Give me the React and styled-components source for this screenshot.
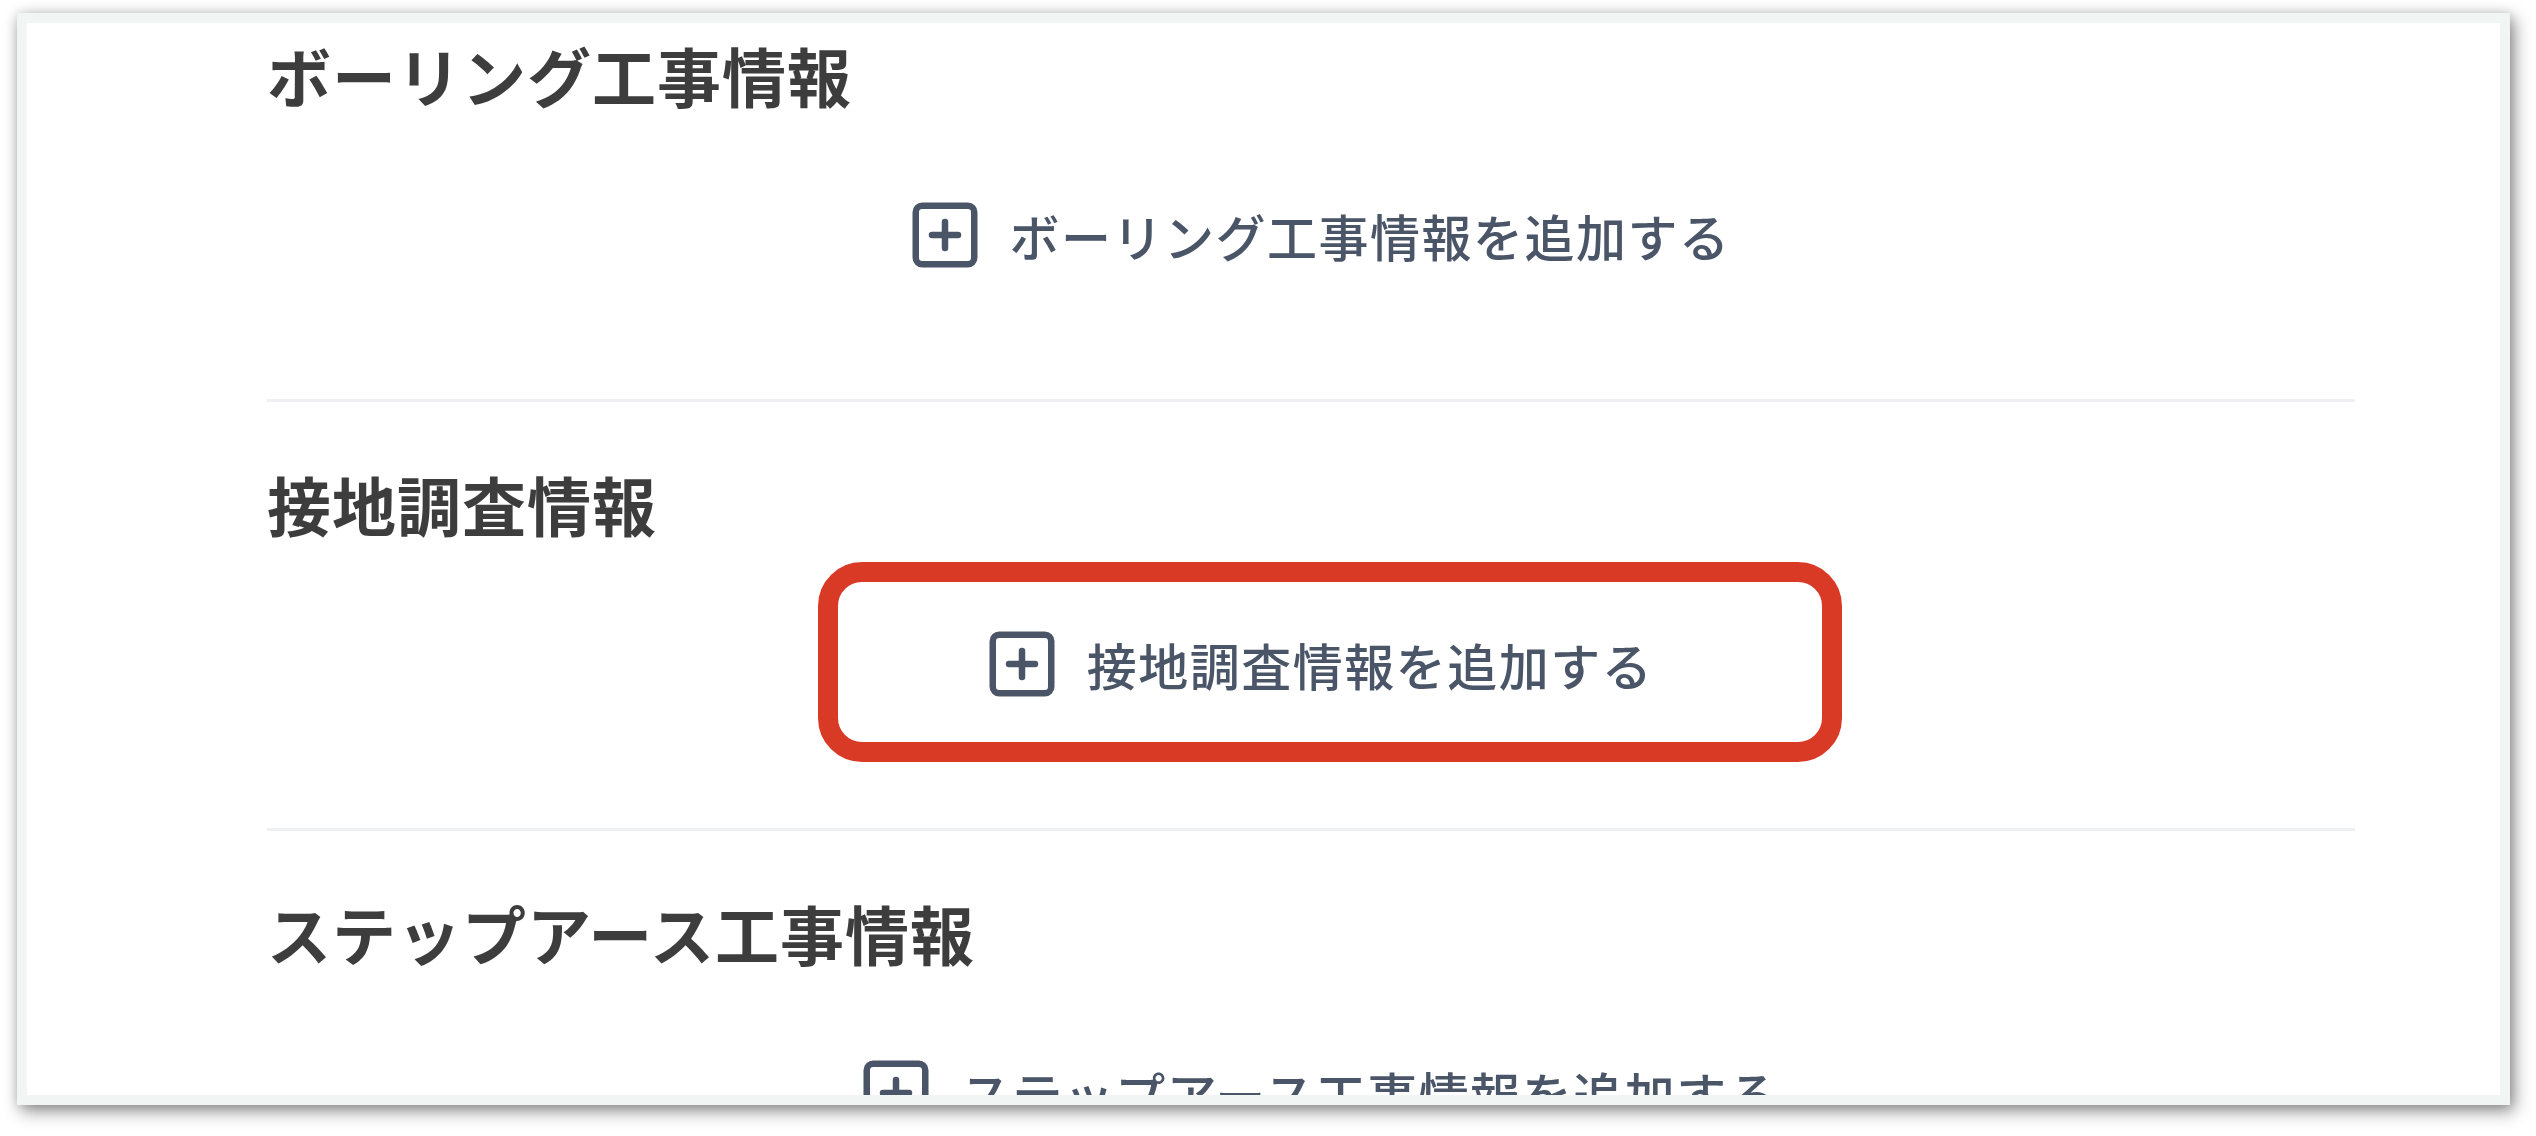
import React from 'react';
import styled, { createGlobalStyle } from 'styled-components';
import { SquarePlus } from 'lucide-react';

const GlobalStyle = createGlobalStyle`
  html, body {
    margin: 0;
    padding: 0;
    background: #ffffff;
  }
  body {
    font-family: "Noto Sans CJK JP", "Noto Sans", sans-serif;
  }
`;

const Page = styled.div`
  box-sizing: border-box;
  width: 2536px;
  height: 1136px;
  padding: 13px 26px 31px 17px;
  background: #ffffff;
`;

const Window = styled.div`
  box-sizing: border-box;
  width: 100%;
  height: 100%;
  border: 10px solid #f1f5f4;
  background: #ffffff;
  box-shadow: 4px 6px 16px rgba(0, 0, 0, 0.45), 0 0 10px rgba(0, 0, 0, 0.12);
  overflow: hidden;
`;

const Content = styled.div`
  display: flex;
  flex-direction: column;
  padding: 3px 145px 0 240px;
`;

const Section = styled.section`
  display: flex;
  flex-direction: column;
  gap: 33px;
  padding: 53px 0 84px;
  border-bottom: 3px solid #eef0f4;

  &:first-child {
    padding-top: 0;
  }
`;

const Heading = styled.h2`
  margin: 0;
  font-size: 64px;
  line-height: 96px;
  font-weight: 700;
  letter-spacing: 1px;
  color: #3d3d3d;
`;

const ButtonRow = styled.div`
  display: flex;
  justify-content: center;
  padding-left: 14px;
`;

const AddButton = styled.button`
  position: relative;
  box-sizing: border-box;
  height: 160px;
  display: inline-flex;
  align-items: center;
  gap: 26px;
  padding: 0 150px;
  border: none;
  background: #ffffff;
  color: #4a5568;
  font-family: inherit;
  font-size: 50px;
  letter-spacing: 1.5px;
  font-weight: 500;
  cursor: pointer;

  svg {
    flex: none;
  }

  ${({ $highlighted }) => $highlighted && `
    &::after {
      content: '';
      position: absolute;
      top: -22px;
      bottom: -18px;
      left: -15px;
      right: -39px;
      border: 20px solid #d93a25;
      border-radius: 44px;
      pointer-events: none;
    }
  `}
`;

const sections = [
  { title: 'ボーリング工事情報' },
  { title: '接地調査情報', highlighted: true },
  { title: 'ステップアース工事情報' },
];

const App = () => (
  <Page>
    <GlobalStyle />
    <Window>
      <Content>
        {sections.map((s) => (
          <Section key={s.title}>
            <Heading>{s.title}</Heading>
            <ButtonRow>
              <AddButton type="button" $highlighted={s.highlighted}>
                <SquarePlus size={78} strokeWidth={2} />
                <span>{s.title}を追加する</span>
              </AddButton>
            </ButtonRow>
          </Section>
        ))}
      </Content>
    </Window>
  </Page>
);

export default App;
